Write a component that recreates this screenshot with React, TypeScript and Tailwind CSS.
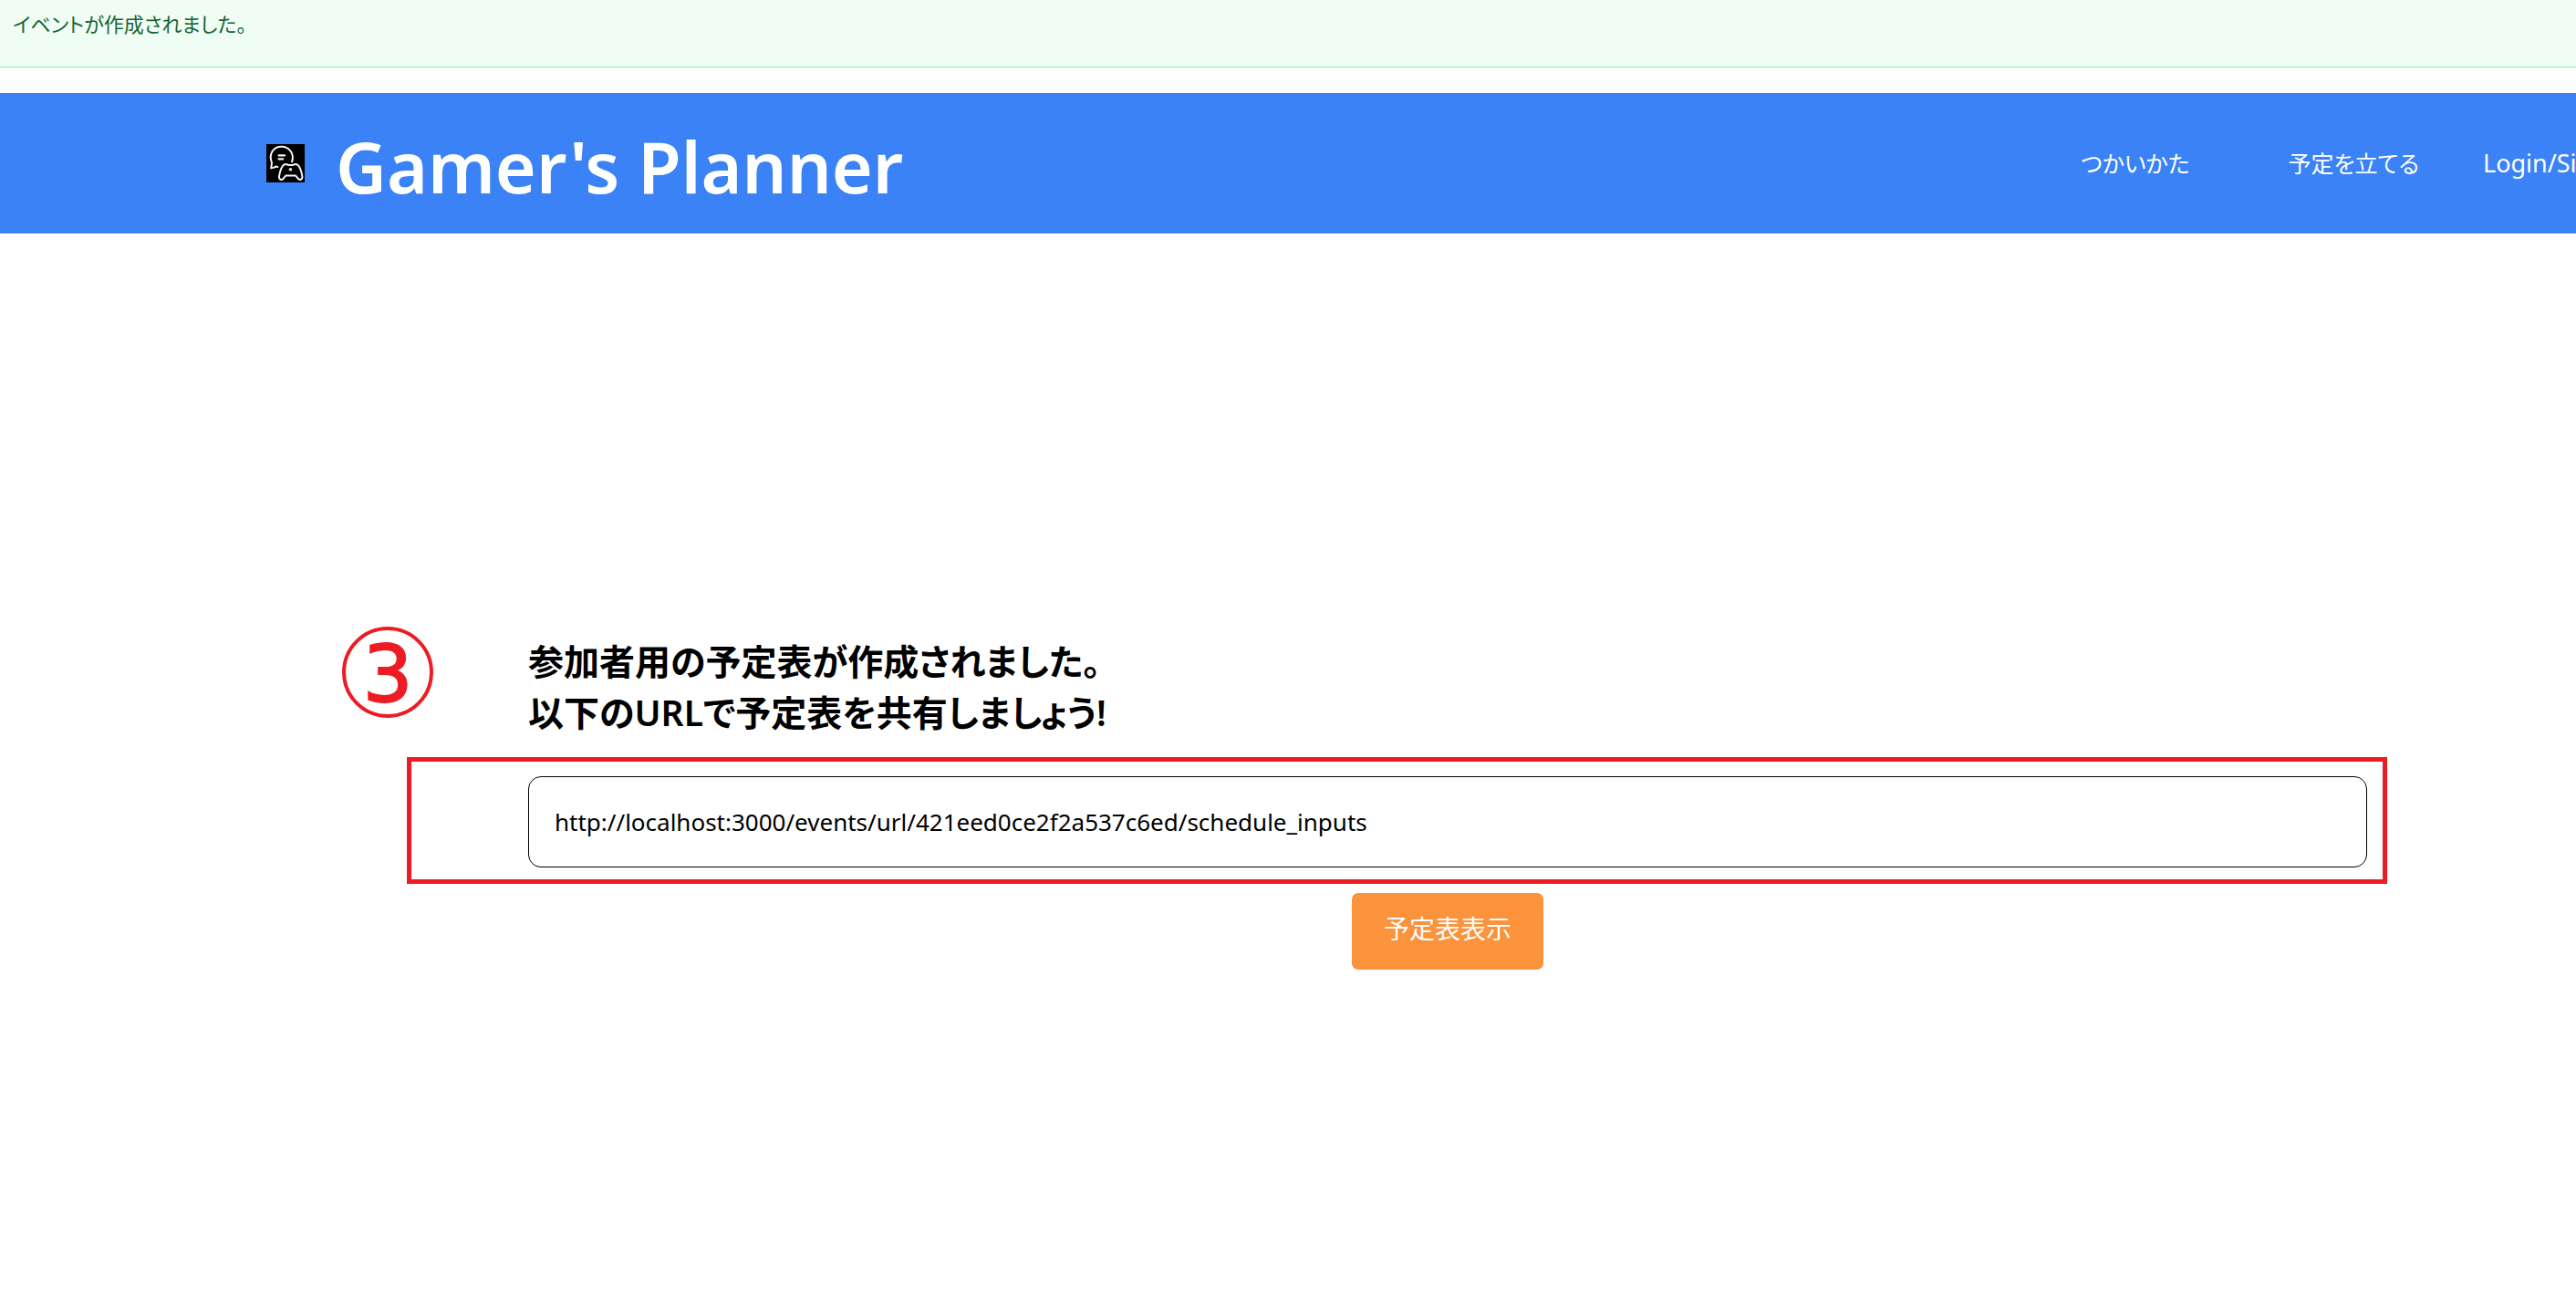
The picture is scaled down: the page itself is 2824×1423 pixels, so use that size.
import React from "react";

const EVENT_URL =
  "http://localhost:3000/events/url/421eed0ce2f2a537c6ed/schedule_inputs";

function Logo() {
  return (
    <svg
      viewBox="0 0 42 42"
      className="size-[42px] shrink-0 bg-black"
      fill="none"
      stroke="#f4f4f4"
      strokeWidth="2"
      strokeLinecap="round"
      strokeLinejoin="round"
      aria-hidden="true"
    >
      <path d="M12.4 25 C10.6 24 9.6 24.8 8.4 25.6 L5.2 26.4 L6 20.5 C2.2 11 7.6 2.8 16.5 2.8 C25.5 2.8 31.2 11 28 19.4" />
      <path d="M13.6 12.4 H20 M13.6 16.4 H18.2" strokeWidth="2.2" />
      <path d="M20 22.2 C22 21.4 23.2 22.8 24.6 23 H28.6 C30 22.8 31.4 21.4 33.4 22.2 C36.4 23.8 38.6 30.6 39.4 35.4 C39.8 39 36.6 40 34.8 37.8 L32 34.4 H21.4 L18.6 37.8 C16.8 40 13.6 39 14 35.4 C14.8 30.6 17 23.8 20 22.2 Z" />
      <rect x="25.6" y="26.8" width="2" height="2" fill="#f4f4f4" strokeWidth="1" />
    </svg>
  );
}

export default function App() {
  return (
    <div className="min-h-screen overflow-hidden bg-white font-['Noto_Sans','Noto_Sans_CJK_JP',sans-serif] text-black [font-feature-settings:'palt']">
      <div
        role="status"
        className="border-b border-green-300 bg-[#f0fdf4] px-[14px] pt-[8px] pb-[29px] text-[22px] leading-[36px] text-[#166534]"
      >
        イベントが作成されました。
      </div>

      <header className="mt-[28px] flex h-[154px] items-center bg-[#3b82f6] pl-[292px] text-white">
        <Logo />
        <h1 className="ml-[34px] pt-[8px] text-[77px] leading-[84px] font-semibold whitespace-nowrap">
          Gamer's Planner
        </h1>
        <nav className="ml-auto flex shrink-0 items-center text-[25px] leading-[42px] whitespace-nowrap">
          <a href="#howto" className="mr-[108px]">
            つかいかた
          </a>
          <a href="#plan" className="mr-[70px]">
            予定を立てる
          </a>
          <a href="#login" className="w-[102px] text-[27px]">
            Login/Si
          </a>
        </nav>
      </header>

      <main className="relative mt-[441px] mr-[229px] ml-[579px]">
        <div className="absolute -top-[10px] -left-[204px] flex size-[100px] items-center justify-center rounded-full border-4 border-[#ed1c24] pt-[4px] font-['DejaVu_Sans',sans-serif] text-[86px] leading-none text-[#ed1c24] [-webkit-text-stroke:2px_#ed1c24]">
          3
        </div>
        <h2
          id="share-title"
          className="text-[39px] leading-[56px] font-semibold whitespace-nowrap"
        >
          参加者用の予定表が作成されました。
          <br />
          以下のURLで予定表を共有しましょう!
        </h2>
        <div className="relative mt-[42px]">
          <div className="pointer-events-none absolute -top-[21px] -right-[22px] -bottom-[18px] -left-[133px] border-[5px] border-[#ed1c24]" />
          <input
            type="text"
            readOnly
            value={EVENT_URL}
            aria-labelledby="share-title"
            className="block h-[100px] w-full rounded-[14px] border border-black bg-white px-[28px] text-[26px]"
          />
        </div>
        <div className="mt-[28px] flex justify-center">
          <button
            type="button"
            className="h-[84px] rounded-[7px] bg-[#fb923c] px-[35px] pb-[6px] text-[28px] leading-[42px] text-white"
          >
            予定表表示
          </button>
        </div>
      </main>
    </div>
  );
}
